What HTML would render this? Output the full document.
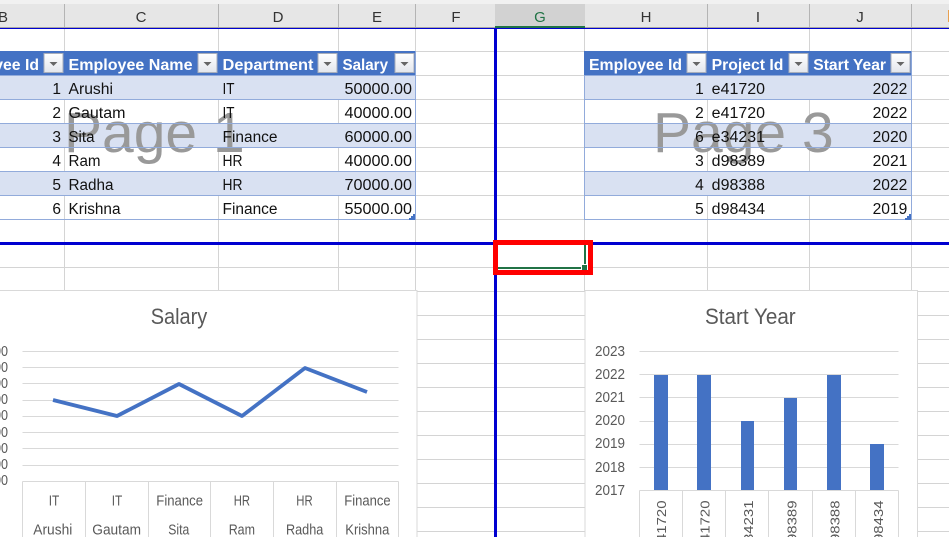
<!DOCTYPE html>
<html><head><meta charset="utf-8"><style>
html,body{margin:0;padding:0;background:#fff;width:949px;height:537px;overflow:hidden}
svg{display:block;font-family:"Liberation Sans",sans-serif}
.c{font-size:15.5px;fill:#111}
.e{font-size:15.5px;fill:#111;text-anchor:end}
.h{font-size:15.5px;font-weight:bold;fill:#fff}
.l{font-size:14.5px;fill:#595959}
.t{font-size:22px;fill:#595959}
.a{font-size:15px;fill:#333;text-anchor:middle}
.w{font-size:57px;fill:#999}
.r{font-size:13px;fill:#595959;text-anchor:end}
</style></head><body>
<svg width="949" height="537" viewBox="0 0 949 537" xmlns="http://www.w3.org/2000/svg">
<defs>
<linearGradient id="b" x1="0" y1="0" x2="0" y2="1"><stop offset="0" stop-color="#fff"/><stop offset="1" stop-color="#e3e6ec"/></linearGradient>
<g id="f"><rect x=".5" y=".5" width="19" height="19" fill="url(#b)" stroke="#a8aebb"/><path d="M6 9h8l-4 4z" fill="#666"/></g>
</defs>
<rect width="949" height="537" fill="#fff"/>
<!-- column header -->
<rect width="949" height="4" fill="#f1f1f1"/>
<rect y="4" width="949" height="23" fill="#e6e6e6"/>
<rect x="495" y="4" width="90" height="22" fill="#d2d2d2"/>
<rect y="27" width="949" height="1" fill="#a6a6a6"/>
<rect x="495" y="26" width="90" height="2" fill="#217346"/>
<g fill="#b4b4b4"><rect x="64" y="4" width="1" height="23"/><rect x="218" y="4" width="1" height="23"/><rect x="338" y="4" width="1" height="23"/><rect x="415" y="4" width="1" height="23"/><rect x="707" y="4" width="1" height="23"/><rect x="809" y="4" width="1" height="23"/><rect x="911" y="4" width="1" height="23"/></g>
<text class="a" x="3" y="22">B</text><text class="a" x="141" y="22">C</text><text class="a" x="278" y="22">D</text><text class="a" x="377" y="22">E</text><text class="a" x="456" y="22">F</text><text class="a" x="540" y="22" style="fill:#217346">G</text><text class="a" x="646" y="22">H</text><text class="a" x="758" y="22">I</text><text class="a" x="860" y="22">J</text>
<rect x="948" y="10" width="1" height="12" fill="#e8a050"/>
<!-- grid -->
<g fill="#d4d4d4">
<rect y="51" width="949" height="1"/><rect y="75" width="949" height="1"/><rect y="99" width="949" height="1"/><rect y="123" width="949" height="1"/><rect y="147" width="949" height="1"/><rect y="171" width="949" height="1"/><rect y="195" width="949" height="1"/><rect y="219" width="949" height="1"/><rect y="267" width="949" height="1"/>
<rect y="291" width="949" height="1"/><rect y="315" width="949" height="1"/><rect y="339" width="949" height="1"/><rect y="363" width="949" height="1"/><rect y="387" width="949" height="1"/><rect y="411" width="949" height="1"/><rect y="435" width="949" height="1"/><rect y="459" width="949" height="1"/><rect y="483" width="949" height="1"/><rect y="507" width="949" height="1"/><rect y="531" width="949" height="1"/>
<rect x="64" y="28" width="1" height="263"/><rect x="218" y="28" width="1" height="263"/><rect x="338" y="28" width="1" height="263"/><rect x="415" y="28" width="1" height="263"/><rect x="584" y="28" width="1" height="263"/><rect x="707" y="28" width="1" height="263"/><rect x="809" y="28" width="1" height="263"/><rect x="911" y="28" width="1" height="263"/>
</g>
<!-- table fills -->
<rect x="0" y="51" width="416" height="24" fill="#4472c4"/>
<g fill="#d9e1f2"><rect y="76" width="416" height="23"/><rect y="124" width="416" height="23"/><rect y="172" width="416" height="23"/></g>
<rect x="584" y="51" width="328" height="24" fill="#4472c4"/>
<g fill="#d9e1f2"><rect x="585" y="76" width="327" height="23"/><rect x="585" y="124" width="327" height="23"/><rect x="585" y="172" width="327" height="23"/></g>
<!-- watermarks -->
<text class="w" x="64" y="152">Page 1</text>
<text class="w" x="653" y="152">Page 3</text>
<!-- table borders -->
<g fill="#8ea9db" fill-opacity=".95"><rect y="75" width="416" height="1"/><rect y="99" width="416" height="1"/><rect y="123" width="416" height="1"/><rect y="147" width="416" height="1"/><rect y="171" width="416" height="1"/><rect y="195" width="416" height="1"/><rect y="219" width="416" height="1"/><rect x="415" y="51" width="1" height="169"/></g>
<g fill="#8ea9db" fill-opacity=".95"><rect x="584" y="75" width="328" height="1"/><rect x="584" y="99" width="328" height="1"/><rect x="584" y="123" width="328" height="1"/><rect x="584" y="147" width="328" height="1"/><rect x="584" y="171" width="328" height="1"/><rect x="584" y="195" width="328" height="1"/><rect x="584" y="219" width="328" height="1"/><rect x="584" y="75" width="1" height="145"/><rect x="911" y="51" width="1" height="169"/></g>
<!-- filter buttons -->
<use href="#f" x="43.5" y="53"/><use href="#f" x="197.5" y="53"/><use href="#f" x="317.5" y="53"/><use href="#f" x="394.5" y="53"/>
<use href="#f" x="686.5" y="53"/><use href="#f" x="788.5" y="53"/><use href="#f" x="890.5" y="53"/>
<!-- header text -->
<text class="h" x="-54" y="70" textLength="93" lengthAdjust="spacingAndGlyphs">Employee Id</text>
<text class="h" x="68.5" y="70" textLength="124" lengthAdjust="spacingAndGlyphs">Employee Name</text>
<text class="h" x="222.5" y="70" textLength="91" lengthAdjust="spacingAndGlyphs">Department</text>
<text class="h" x="342.5" y="70" textLength="45.5" lengthAdjust="spacingAndGlyphs">Salary</text>
<text class="h" x="589" y="70" textLength="93" lengthAdjust="spacingAndGlyphs">Employee Id</text>
<text class="h" x="711.7" y="70" textLength="71.7" lengthAdjust="spacingAndGlyphs">Project Id</text>
<text class="h" x="813.3" y="70" textLength="72.7" lengthAdjust="spacingAndGlyphs">Start Year</text>
<!-- left cells -->
<text class="e" x="61" y="94">1</text><text class="e" x="61" y="118">2</text><text class="e" x="61" y="142">3</text><text class="e" x="61" y="166">4</text><text class="e" x="61" y="190">5</text><text class="e" x="61" y="214">6</text>
<text class="c" x="68.5" y="94" textLength="44.5" lengthAdjust="spacingAndGlyphs">Arushi</text>
<text class="c" x="68.5" y="118" textLength="57" lengthAdjust="spacingAndGlyphs">Gautam</text>
<text class="c" x="68.5" y="142" textLength="26" lengthAdjust="spacingAndGlyphs">Sita</text>
<text class="c" x="68.5" y="166" textLength="32" lengthAdjust="spacingAndGlyphs">Ram</text>
<text class="c" x="68.5" y="190" textLength="45" lengthAdjust="spacingAndGlyphs">Radha</text>
<text class="c" x="68.5" y="214" textLength="52" lengthAdjust="spacingAndGlyphs">Krishna</text>
<text class="c" x="222.5" y="94" textLength="12" lengthAdjust="spacingAndGlyphs">IT</text>
<text class="c" x="222.5" y="118" textLength="12" lengthAdjust="spacingAndGlyphs">IT</text>
<text class="c" x="222.5" y="142" textLength="55" lengthAdjust="spacingAndGlyphs">Finance</text>
<text class="c" x="222.5" y="166" textLength="20" lengthAdjust="spacingAndGlyphs">HR</text>
<text class="c" x="222.5" y="190" textLength="20" lengthAdjust="spacingAndGlyphs">HR</text>
<text class="c" x="222.5" y="214" textLength="55" lengthAdjust="spacingAndGlyphs">Finance</text>
<text class="c" x="344.5" y="94" textLength="67.5" lengthAdjust="spacingAndGlyphs">50000.00</text>
<text class="c" x="344.5" y="118" textLength="67.5" lengthAdjust="spacingAndGlyphs">40000.00</text>
<text class="c" x="344.5" y="142" textLength="67.5" lengthAdjust="spacingAndGlyphs">60000.00</text>
<text class="c" x="344.5" y="166" textLength="67.5" lengthAdjust="spacingAndGlyphs">40000.00</text>
<text class="c" x="344.5" y="190" textLength="67.5" lengthAdjust="spacingAndGlyphs">70000.00</text>
<text class="c" x="344.5" y="214" textLength="67.5" lengthAdjust="spacingAndGlyphs">55000.00</text>
<!-- right cells -->
<text class="e" x="703.7" y="94">1</text><text class="e" x="703.7" y="118">2</text><text class="e" x="703.7" y="142">6</text><text class="e" x="703.7" y="166">3</text><text class="e" x="703.7" y="190">4</text><text class="e" x="703.7" y="214">5</text>
<text class="c" x="711.7" y="94" textLength="53.3" lengthAdjust="spacingAndGlyphs">e41720</text>
<text class="c" x="711.7" y="118" textLength="53.3" lengthAdjust="spacingAndGlyphs">e41720</text>
<text class="c" x="711.7" y="142" textLength="53.3" lengthAdjust="spacingAndGlyphs">e34231</text>
<text class="c" x="711.7" y="166" textLength="53.3" lengthAdjust="spacingAndGlyphs">d98389</text>
<text class="c" x="711.7" y="190" textLength="53.3" lengthAdjust="spacingAndGlyphs">d98388</text>
<text class="c" x="711.7" y="214" textLength="53.3" lengthAdjust="spacingAndGlyphs">d98434</text>
<text class="c" x="872.6" y="94" textLength="34.7" lengthAdjust="spacingAndGlyphs">2022</text>
<text class="c" x="872.6" y="118" textLength="34.7" lengthAdjust="spacingAndGlyphs">2022</text>
<text class="c" x="872.6" y="142" textLength="34.7" lengthAdjust="spacingAndGlyphs">2020</text>
<text class="c" x="872.6" y="166" textLength="34.7" lengthAdjust="spacingAndGlyphs">2021</text>
<text class="c" x="872.6" y="190" textLength="34.7" lengthAdjust="spacingAndGlyphs">2022</text>
<text class="c" x="872.6" y="214" textLength="34.7" lengthAdjust="spacingAndGlyphs">2019</text>
<!-- table handles -->
<path d="M415 214v6h-6v-2h2v-2h2v-2z" fill="#4472c4"/>
<path d="M911 214v6h-6v-2h2v-2h2v-2z" fill="#4472c4"/>
<!-- left chart -->
<rect x="-2" y="290.5" width="419" height="250" fill="#fff" stroke="#d9d9d9"/>
<text class="t" x="150.7" y="324" textLength="56.6" lengthAdjust="spacingAndGlyphs">Salary</text>
<g stroke="#d9d9d9" stroke-width="1" fill="none">
<path d="M22.5 351.5H398.5M22.5 367.5H398.5M22.5 383.5H398.5M22.5 400.5H398.5M22.5 416.5H398.5M22.5 432.5H398.5M22.5 448.5H398.5M22.5 465.5H398.5M22.5 481.5H398.5"/>
<path d="M22.5 481.5V537M85.5 481.5V537M148.5 481.5V537M210.5 481.5V537M273.5 481.5V537M336.5 481.5V537M398.5 481.5V537"/>
</g>
<text class="l" x="-6" y="356" textLength="14" lengthAdjust="spacingAndGlyphs">00</text>
<text class="l" x="-6" y="372" textLength="14" lengthAdjust="spacingAndGlyphs">00</text>
<text class="l" x="-6" y="388" textLength="14" lengthAdjust="spacingAndGlyphs">00</text>
<text class="l" x="-6" y="404" textLength="14" lengthAdjust="spacingAndGlyphs">00</text>
<text class="l" x="-6" y="420" textLength="14" lengthAdjust="spacingAndGlyphs">00</text>
<text class="l" x="-6" y="437" textLength="14" lengthAdjust="spacingAndGlyphs">00</text>
<text class="l" x="-6" y="453" textLength="14" lengthAdjust="spacingAndGlyphs">00</text>
<text class="l" x="-6" y="469" textLength="14" lengthAdjust="spacingAndGlyphs">00</text>
<text class="l" x="-6" y="485" textLength="14" lengthAdjust="spacingAndGlyphs">00</text>
<polyline points="53,400 117,416 179,384 242,416 305,368 367,392" fill="none" stroke="#4472c4" stroke-width="3.8" stroke-linejoin="round"/>
<text class="l" x="48.7" y="505.5" textLength="10.6" lengthAdjust="spacingAndGlyphs">IT</text>
<text class="l" x="111.7" y="505.5" textLength="10.6" lengthAdjust="spacingAndGlyphs">IT</text>
<text class="l" x="156.3" y="505.5" textLength="46.7" lengthAdjust="spacingAndGlyphs">Finance</text>
<text class="l" x="233.7" y="505.5" textLength="16.3" lengthAdjust="spacingAndGlyphs">HR</text>
<text class="l" x="296.3" y="505.5" textLength="16.4" lengthAdjust="spacingAndGlyphs">HR</text>
<text class="l" x="344.3" y="505.5" textLength="46.4" lengthAdjust="spacingAndGlyphs">Finance</text>
<text class="l" x="33.3" y="534.5" textLength="39" lengthAdjust="spacingAndGlyphs">Arushi</text>
<text class="l" x="92.3" y="534.5" textLength="48.7" lengthAdjust="spacingAndGlyphs">Gautam</text>
<text class="l" x="168.3" y="534.5" textLength="21" lengthAdjust="spacingAndGlyphs">Sita</text>
<text class="l" x="228.7" y="534.5" textLength="26.3" lengthAdjust="spacingAndGlyphs">Ram</text>
<text class="l" x="286" y="534.5" textLength="37.3" lengthAdjust="spacingAndGlyphs">Radha</text>
<text class="l" x="345.3" y="534.5" textLength="44" lengthAdjust="spacingAndGlyphs">Krishna</text>
<!-- right chart -->
<rect x="585" y="290.5" width="332.5" height="250" fill="#fff" stroke="#d9d9d9"/>
<text class="t" x="705" y="324" textLength="90.7" lengthAdjust="spacingAndGlyphs">Start Year</text>
<g stroke="#d9d9d9" stroke-width="1" fill="none">
<path d="M639.5 351.5H898.5M639.5 374.5H898.5M639.5 397.5H898.5M639.5 421.5H898.5M639.5 444.5H898.5M639.5 467.5H898.5M639.5 490.5H898.5"/>
<path d="M639.5 490.5V537M682.5 490.5V537M725.5 490.5V537M768.5 490.5V537M812.5 490.5V537M855.5 490.5V537M898.5 490.5V537"/>
</g>
<g fill="#4472c4">
<rect x="654" y="375" width="14" height="115"/><rect x="697" y="375" width="14" height="115"/><rect x="741" y="421" width="13" height="69"/><rect x="784" y="398" width="13" height="92"/><rect x="827" y="375" width="14" height="115"/><rect x="870" y="444" width="14" height="46"/>
</g>
<text class="l" x="595" y="356" textLength="30" lengthAdjust="spacingAndGlyphs">2023</text>
<text class="l" x="595" y="379" textLength="30" lengthAdjust="spacingAndGlyphs">2022</text>
<text class="l" x="595" y="402" textLength="30" lengthAdjust="spacingAndGlyphs">2021</text>
<text class="l" x="595" y="425" textLength="30" lengthAdjust="spacingAndGlyphs">2020</text>
<text class="l" x="595" y="448" textLength="30" lengthAdjust="spacingAndGlyphs">2019</text>
<text class="l" x="595" y="472" textLength="30" lengthAdjust="spacingAndGlyphs">2018</text>
<text class="l" x="595" y="495" textLength="30" lengthAdjust="spacingAndGlyphs">2017</text>
<text class="r" transform="translate(666 500.5) rotate(-90) scale(1.15 1)">e41720</text>
<text class="r" transform="translate(709.5 500.5) rotate(-90) scale(1.15 1)">e41720</text>
<text class="r" transform="translate(753 500.5) rotate(-90) scale(1.15 1)">e34231</text>
<text class="r" transform="translate(796.5 500.5) rotate(-90) scale(1.15 1)">d98389</text>
<text class="r" transform="translate(839.5 500.5) rotate(-90) scale(1.15 1)">d98388</text>
<text class="r" transform="translate(883 500.5) rotate(-90) scale(1.15 1)">d98434</text>
<!-- page break lines -->
<rect y="28" width="949" height="1" fill="#0000d0"/>
<rect y="242" width="949" height="3" fill="#0000d0"/>
<rect x="494" y="28" width="3" height="509" fill="#0000d0"/>
<!-- selection -->
<rect x="498" y="245" width="90" height="25" fill="#fff"/>
<rect x="498" y="267" width="83" height="2" fill="#217346"/>
<rect x="584" y="245" width="2" height="20" fill="#217346"/>
<rect x="581" y="264" width="7" height="6" fill="#fff"/>
<rect x="582" y="265" width="5" height="5" fill="#217346"/>
<rect x="495.5" y="242.5" width="95" height="30" fill="none" stroke="#ff0000" stroke-width="5"/>
</svg>
</body></html>
